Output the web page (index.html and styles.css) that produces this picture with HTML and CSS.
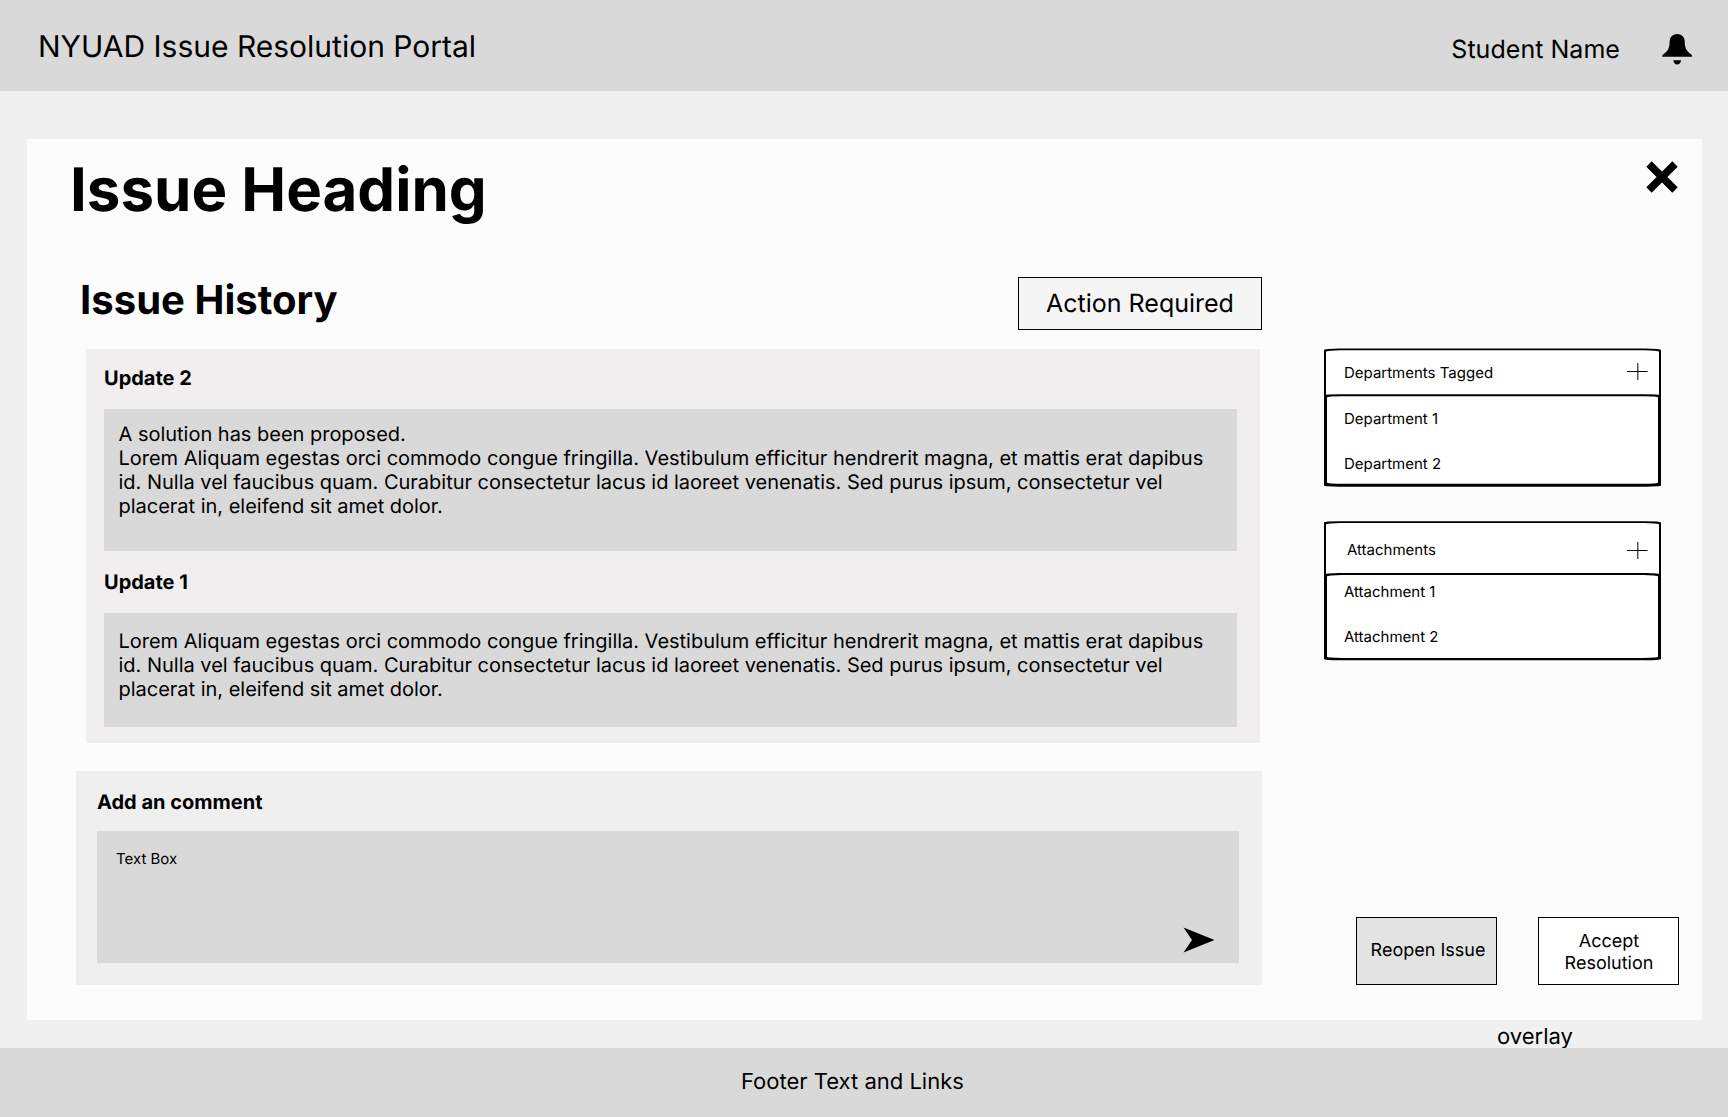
FILE: index.html
```html
<!DOCTYPE html>
<html lang="en">
<head>
<meta charset="utf-8">
<title>NYUAD Issue Resolution Portal</title>
<link rel="stylesheet" href="styles.css">
</head>
<body>
<header class="topbar">
  <div class="brand">NYUAD Issue Resolution Portal</div>
  <div class="user">Student Name</div>
  <svg class="bell" width="31" height="31" viewBox="0 0 31 31"><path d="M15.2 0C11 0 7.9 3 7.7 7C7.6 13.500 6.500 15.800 3.300 18.700C1.500 20.200 0.200 20.800 0.200 22.800H30.200C30.200 20.800 28.900 20.200 27.100 18.700C23.900 15.800 22.800 13.500 22.700 7C22.500 3 19.400 0 15.200 0ZM11.400 26.200H19C19 28.600 17.300 30.400 15.200 30.400S11.400 28.600 11.400 26.200Z"/></svg>
</header>
<main class="stage">
  <section class="dialog">
    <div class="main-col">
      <h1 class="heading">Issue Heading</h1>
      <div class="history-head">
        <h2 class="subheading">Issue History</h2>
        <div class="status">Action Required</div>
      </div>
      <div class="history">
        <h3 class="label">Update 2</h3>
        <div class="update update-new">A solution has been proposed.<br>Lorem Aliquam egestas orci commodo congue fringilla. Vestibulum efficitur hendrerit magna, et mattis erat dapibus<br>id. Nulla vel faucibus quam. Curabitur consectetur lacus id laoreet venenatis. Sed purus ipsum, consectetur vel<br>placerat in, eleifend sit amet dolor.</div>
        <h3 class="label label-next">Update 1</h3>
        <div class="update update-old">Lorem Aliquam egestas orci commodo congue fringilla. Vestibulum efficitur hendrerit magna, et mattis erat dapibus<br>id. Nulla vel faucibus quam. Curabitur consectetur lacus id laoreet venenatis. Sed purus ipsum, consectetur vel<br>placerat in, eleifend sit amet dolor.</div>
      </div>
      <div class="comment">
        <h3 class="label">Add an comment</h3>
        <div class="textbox">
          <span>Text Box</span>
          <svg class="send" width="32" height="26" viewBox="0 0 32 26"><path d="M.5.5L31.500 13L.5 25.500L9 13Z"/></svg>
        </div>
      </div>
    </div>
    <div class="side-col">
      <svg class="close" width="32" height="32" viewBox="0 0 32 32"><path d="M3 3L29 29M29 3L3 29" stroke="#000" stroke-width="7.600"/></svg>
      <div class="group departments">
        <svg class="frame" width="337" height="139" viewBox="0 0 337 139">
          <rect y=".5" width="337" height="60" rx="15" ry="1.300"/>
          <rect x="2" y="2.300" width="333" height="58" rx="15" ry="1.300" fill="#fff"/>
          <rect y="46.200" width="337" height="92.500" rx="15" ry="1.300"/>
          <rect x="3" y="48.200" width="331" height="87.600" rx="15" ry="1.300" fill="#fff"/>
        </svg>
        <div class="group-head"><span>Departments Tagged</span>
          <svg class="plus" width="21" height="17" viewBox="0 0 21 17"><path d="M0 7.500H20.500M10.800 -1V16" stroke="#000"/></svg>
        </div>
        <div class="item">Department 1</div>
        <div class="item">Department 2</div>
      </div>
      <div class="group attachments">
        <svg class="frame" width="337" height="140" viewBox="0 0 337 140">
          <rect y=".2" width="337" height="60" rx="15" ry="1.300"/>
          <rect x="2" y="2" width="333" height="58" rx="15" ry="1.300" fill="#fff"/>
          <rect y="52" width="337" height="87.300" rx="15" ry="1.300"/>
          <rect x="3" y="54" width="331" height="83" rx="15" ry="1.300" fill="#fff"/>
        </svg>
        <div class="group-head"><span>Attachments</span>
          <svg class="plus" width="21" height="17" viewBox="0 0 21 17"><path d="M0 8.500H20.500M10.800 0V17" stroke="#000"/></svg>
        </div>
        <div class="item">Attachment 1</div>
        <div class="item">Attachment 2</div>
      </div>
      <div class="actions">
        <button class="btn btn-reopen">Reopen Issue</button>
        <button class="btn">Accept<br>Resolution</button>
      </div>
    </div>
  </section>
  <div class="note">overlay</div>
</main>
<footer class="footer">Footer Text and Links</footer>
</body>
</html>
```
FILE: styles.css
```css
* { box-sizing: border-box; margin: 0; }
body {
  width: 1728px;
  height: 1117px;
  display: flex;
  flex-direction: column;
  overflow: hidden;
  background: #f0f0f0;
  color: #000;
  font-family: Inter, "Liberation Sans", sans-serif;
  text-rendering: geometricPrecision;
}
svg { display: block; flex: none; overflow: visible; }

.topbar {
  height: 91px;
  flex: none;
  display: flex;
  align-items: flex-start;
  padding: 29px 35px 0 38px;
  background: #d9d9d9;
}
.brand { flex: 1; font-size: 30px; line-height: 36px; }
.user { font-size: 25px; line-height: 30px; padding-top: 6px; letter-spacing: 0.04px; }
.bell { margin: 5px 0 0 42px; }

.stage { flex: 1; min-height: 0; padding: 48px 26px 0 27px; }
.dialog {
  height: 881px;
  display: flex;
  background: #fcfcfc;
}
.main-col { width: 1235px; padding: 15px 0 0 43px; }
.heading { font-size: 60px; line-height: 73px; font-weight: 700; }
.history-head {
  display: flex;
  justify-content: space-between;
  margin-top: 50px;
  padding-left: 10px;
}
.subheading { font-size: 40px; line-height: 48px; font-weight: 700; margin-top: -1px; letter-spacing: 0.04px; }
.status {
  width: 244px;
  height: 53px;
  border: 1px solid #000;
  background: #f5f5f5;
  font-size: 25px;
  line-height: 52px;
  text-align: center;
}
.history {
  height: 394px;
  width: 1174px;
  margin: 19px 0 0 16px;
  padding: 17px 23px 0 18px;
  background: #f0eeef;
}
.label { font-size: 20px; line-height: 24px; font-weight: 700; }
.label-next { margin-top: 19px; }
.update {
  margin-top: 19px;
  padding-left: 14.5px;
  background: #d9d9d9;
  font-size: 20px;
  line-height: 24px;
  letter-spacing: -0.012px;
  white-space: nowrap;
}
.update-new { height: 142px; padding-top: 13px; }
.update-old { height: 114px; padding-top: 16px; }
.comment {
  width: 1186px;
  height: 214px;
  margin: 28px 0 0 6px;
  padding: 19px 23px 0 21px;
  background: #efefef;
}
.textbox {
  height: 132px;
  margin-top: 17px;
  padding: 19px 24px 10px 19px;
  display: flex;
  justify-content: space-between;
  background: #d9d9d9;
  font-size: 15px;
  line-height: 18px;
}
.send { align-self: flex-end; }

.side-col {
  flex: 1;
  display: flex;
  flex-direction: column;
  padding: 22px 23px 35px 62px;
}
.close { align-self: flex-end; margin-right: 1px; }
.group { position: relative; width: 337px; font-size: 15px; line-height: 18px; }
.frame { position: absolute; inset: 0; }
.group-head, .item { position: relative; padding-left: 20px; }
.group-head { display: flex; justify-content: space-between; padding-right: 13px; }
.departments { height: 139px; margin-top: 155px; padding-top: 16px; }
.departments .item { margin-top: 28px; }
.departments .item + .item { margin-top: 27px; }
.attachments { height: 140px; margin-top: 34px; padding-top: 20px; }
.attachments .group-head { padding-left: 23px; }
.attachments .plus { margin-top: 1px; }
.attachments .item { margin-top: 24px; }
.attachments .item + .item { margin-top: 27px; }
.actions {
  display: flex;
  justify-content: flex-end;
  gap: 41px;
  margin-top: auto;
}
.btn {
  width: 141px;
  height: 68px;
  padding: 3px 0 0 1px;
  border: 1px solid #000;
  background: #fff;
  color: #000;
  font: 18px/22px Inter, "Liberation Sans", sans-serif;
  text-rendering: inherit;
  white-space: nowrap;
}
.btn-reopen { background: #e3e3e3; padding: 0 0 1px 3px; }

.note { margin-left: 1470px; padding-top: 4px; font-size: 22px; line-height: 27px; }
.footer {
  height: 69px;
  flex: none;
  padding: 21px 0 0 741px;
  background: #d9d9d9;
  font-size: 22px;
  line-height: 27px;
}
```
